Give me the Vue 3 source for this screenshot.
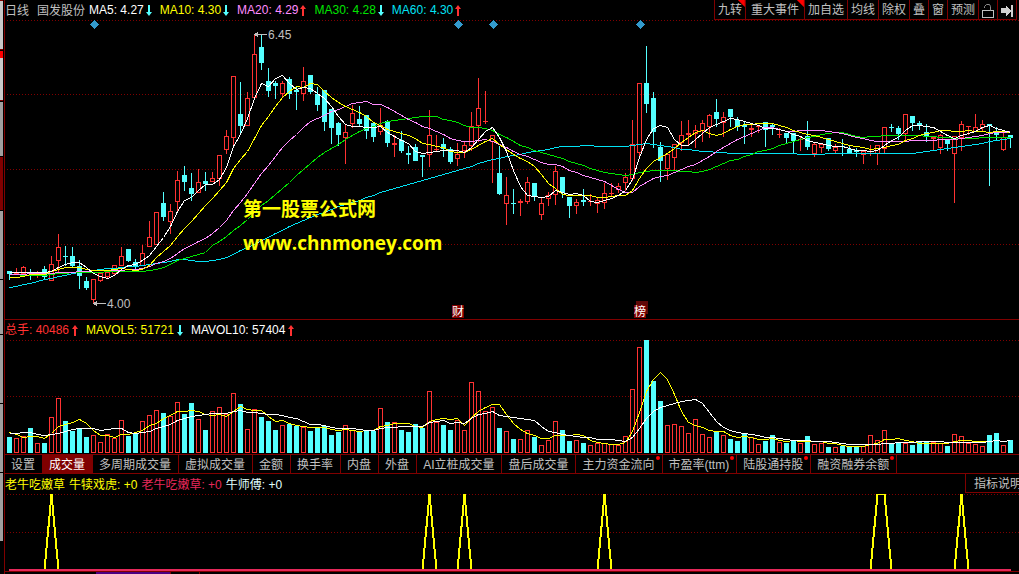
<script setup>
import { ref } from 'vue'

// kind high top bottom low volume  (r = rising, c = falling; prices on the chart's own scale)
const rows = `
c 271 271 274 280 16|r 268 272 274 275 15|r 266 267 273 276 17|c 269 272 273 280 25|r 271 273 275 278 10
c 266 269 277 279 10|r 256 264 280 280 36|r 234 247 260 272 55|c 246 256 257 266 32|c 247 256 266 267 22
c 260 266 276 289 25|c 277 281 288 290 16|r 279 279 299 303 18|r 272 273 280 282 11|r 271 272 276 279 19
r 265 265 273 275 15|r 247 256 265 266 33|c 249 249 261 262 17|c 259 262 266 269 20|r 245 253 265 266 32
r 221 237 246 247 38|r 212 212 244 245 43|c 192 203 217 221 40|r 204 211 221 234 37|r 171 180 201 212 51
c 166 175 182 191 39|c 173 188 194 201 50|r 169 182 192 193 34|c 172 181 184 191 23|r 172 178 181 182 42
r 155 155 178 186 46|r 130 136 149 154 39|r 76 76 137 146 60|c 82 114 126 134 49|r 92 98 125 126 24
r 34 54 97 98 44|c 35 47 63 70 36|c 68 81 91 97 32|c 81 83 86 99 23|r 81 83 93 98 28
c 77 79 94 99 29|c 87 90 92 110 27|r 67 81 93 101 26|c 75 75 92 94 22|c 87 94 105 111 26
c 90 90 122 131 27|c 109 109 128 144 18|c 122 123 135 146 21|r 125 132 137 164 28|r 105 113 123 128 23
c 106 119 124 126 21|c 115 115 131 139 22|c 122 123 137 142 22|r 108 125 131 135 45|c 120 121 143 147 31
r 135 143 145 157 31|c 131 140 151 153 23|c 146 153 155 164 21|c 144 147 161 161 29|c 155 155 157 177 25
r 110 135 154 167 62|r 135 149 150 151 31|c 138 144 149 157 28|c 147 149 162 164 23|r 143 154 158 166 33
r 142 145 150 158 23|r 112 126 145 151 71|r 78 108 125 142 62|r 91 121 122 124 42|r 135 135 141 183 46
c 146 173 194 195 25|r 177 195 203 225 22|c 189 203 204 214 14|r 199 201 203 216 14|r 177 182 201 204 23
c 183 183 197 201 16|r 197 203 214 220 8|r 192 195 198 206 13|r 166 171 194 205 32|c 177 177 193 198 23
c 197 197 206 218 12|r 199 202 205 214 13|c 189 200 202 206 10|r 194 201 202 206 8|r 197 200 203 213 10
r 183 193 202 209 10|r 183 193 194 197 9|r 183 186 189 193 8|r 173 177 182 191 17|r 120 144 178 181 64
r 83 83 152 158 106|c 46 83 104 113 113|c 92 98 132 148 72|c 142 147 161 182 52|r 153 154 168 180 28
r 144 144 157 171 29|r 121 135 142 151 27|r 120 133 135 145 20|r 125 130 133 148 34|r 120 123 130 142 19
r 114 115 126 138 16|c 99 112 119 127 22|r 112 117 122 137 18|c 109 109 117 127 14|c 117 120 127 131 12
c 121 125 127 144 19|r 125 128 130 137 16|r 125 126 127 133 9|c 122 122 130 147 12|c 123 125 127 135 18
r 128 134 135 138 11|c 133 133 138 143 10|c 133 133 141 153 13|r 137 139 140 151 10|c 121 136 147 150 17
r 143 144 153 157 9|r 143 144 147 153 10|c 138 138 149 151 6|r 144 147 150 153 6|c 139 146 147 156 7
c 145 149 153 153 7|c 148 150 152 157 7|r 151 151 154 164 7|r 145 151 152 156 18|r 145 145 153 165 13
r 127 127 148 153 23|c 124 127 128 132 10|c 126 128 134 140 10|r 114 114 133 140 10|c 116 116 123 131 8
c 121 123 125 130 11|c 124 132 136 142 11|r 137 137 139 150 11|r 134 135 147 154 10|c 139 139 144 151 7
r 136 136 153 203 19|r 121 124 137 151 17|r 126 126 127 135 10|r 114 127 131 132 9|r 120 124 127 132 7
c 124 124 126 186 18|c 127 133 135 141 20|r 133 137 149 151 8|c 135 135 138 148 13`

const VOLUME_BASE = 453
const bars = rows.trim().split(/[|\n]/).map((row, i) => {
  const [kind, ...n] = row.split(' ')
  const [high, top, bottom, low, volume] = n.map(Number)
  return { x: 9 + 7 * i, up: kind === 'r', high, top, bottom, low, volume, close: kind === 'r' ? top : bottom }
})

// Values before a full averaging window is available, as [bar index, value] knots.
function lead(knots, i) {
  for (let k = 1; k < knots.length; k++) {
    const [a, va] = knots[k - 1]
    const [b, vb] = knots[k]
    if (i <= b) return va + ((vb - va) * (i - a)) / (b - a)
  }
  return knots[knots.length - 1][1]
}

function average(values, span, knots, toY = (v) => v) {
  return values
    .map((_, i) => {
      const v = i < span - 1 ? lead(knots, i) : values.slice(i - span + 1, i + 1).reduce((a, b) => a + b) / span
      return `${bars[i].x + 0.5},${Math.round(toY(v)) + 0.5}`
    })
    .join(' ')
}

const closes = bars.map((b) => b.close)
const volumes = bars.map((b) => b.volume)
const volumeY = (v) => VOLUME_BASE - v

const priceLines = [
  { color: '#02e2f4', points: average(closes, 60, [[0, 287], [4, 281], [9, 273], [13, 269], [17, 266], [19, 265], [22, 262], [24, 259], [25, 259], [27, 261], [29, 260], [31, 257], [34, 247], [36, 240], [40, 226], [43, 217], [47, 206], [50, 200], [53, 192], [57, 184], [58, 182]]) },
  { color: '#00e600', points: average(closes, 30, [[0, 274], [4, 275], [6, 274], [9, 272], [18, 271], [20, 270], [21, 269], [23, 264], [24, 260], [28, 252]]) },
  { color: '#ff8cff', points: average(closes, 20, [[0, 274], [4, 273], [9, 272], [12, 270], [14, 270], [18, 269]]) },
  { color: '#ffff00', points: average(closes, 10, [[0, 277], [1, 277], [3, 274], [5, 274], [6, 271], [8, 267]]) },
  { color: '#ffffff', points: average(closes, 5, [[0, 272], [4, 272]]) },
]
const volumeLines = [
  { color: '#ffff00', points: average(volumes, 5, [[0, 21], [1, 19], [2, 16], [3, 17]], volumeY) },
  { color: '#ffffff', points: average(volumes, 10, [[0, 20], [3, 21], [5, 18], [6, 19], [8, 22]], volumeY) },
]

const signals = [6, 60, 65, 85, 124, 125, 136]
const signalPoints = bars.map((b, i) => `${b.x + 0.5},${signals.includes(i) ? 494 : 570}`).join(' ')

const left = (x) => ({ left: `${((x - 5) / 1014) * 100}%` })
const diamonds = [94, 458, 493, 640]

const averages = [
  { text: 'MA5: 4.27', tone: 'white', up: false },
  { text: 'MA10: 4.30', tone: 'yellow', up: false },
  { text: 'MA20: 4.29', tone: 'pink', up: true },
  { text: 'MA30: 4.28', tone: 'green', up: false },
  { text: 'MA60: 4.30', tone: 'blue', up: true },
]
const volumeReadings = [
  { text: '总手: 40486', tone: 'red', up: true },
  { text: 'MAVOL5: 51721', tone: 'yellow', up: false },
  { text: 'MAVOL10: 57404', tone: 'white', up: true },
]
const tools = [
  { text: '九转', flag: true },
  { text: '重大事件', flag: true, wide: true },
  { text: '加自选' },
  { text: '均线' },
  { text: '除权' },
  { text: '叠' },
  { text: '窗' },
  { text: '预测' },
]
const tabs = [
  { text: '设置' },
  { text: '成交量' },
  { text: '多周期成交量' },
  { text: '虚拟成交量' },
  { text: '金额' },
  { text: '换手率' },
  { text: '内盘' },
  { text: '外盘' },
  { text: 'AI立桩成交量' },
  { text: '盘后成交量' },
  { text: '主力资金流向', dot: true },
  { text: '市盈率(ttm)', dot: true },
  { text: '陆股通持股', dot: true },
  { text: '融资融券余额', dot: true },
]
const active = ref('成交量')
const UP = '3,0 6,4 4,4 4,11 2,11 2,4 0,4'
const DOWN = '2,0 4,0 4,7 6,7 3,11 0,7 2,7'
</script>

<template>
  <div class="terminal">
    <aside class="rail" aria-hidden="true">
      <i class="light first"></i>
      <i class="light flagged"></i>
      <i class="mid h54"></i>
      <i class="dark"></i>
      <i class="mid h69"></i>
      <i class="mid h54"></i>
      <i class="mid h69"></i>
      <i class="mid h69"></i>
      <i class="mid h69 last"></i>
    </aside>

    <main class="content">
      <header class="bar">
        <span class="period">日线</span>
        <span class="name">国发股份</span>
        <span v-for="m in averages" :key="m.text" class="reading" :class="m.tone">
          {{ m.text }}
          <svg class="trend" viewBox="0 0 6 11">
            <polygon :points="m.up ? UP : DOWN" :fill="m.up ? '#ff3232' : '#54ffff'" />
          </svg>
        </span>
        <nav class="tools">
          <button v-for="t in tools" :key="t.text" type="button" :class="{ flag: t.flag, wide: t.wide }">{{ t.text }}</button>
          <button type="button" aria-label="锁定">
            <svg class="tool-icon" viewBox="0 0 12 16" fill="none" stroke="#c0c0c0">
              <rect x="0.5" y="7.5" width="11" height="7" />
              <path d="M8.500 7.500V3.500L7.500 1.500H4.500L2.500 3.500V5" stroke="#8c8c8c" />
            </svg>
          </button>
          <button type="button" aria-label="最新">
            <svg class="tool-icon" viewBox="0 0 12 16" fill="#d0d0d0" shape-rendering="crispEdges">
              <path d="M0 5H5V2L10 8L5 13V10H0Z" />
              <rect x="10" y="2" width="2" height="12" />
            </svg>
          </button>
        </nav>
      </header>

      <section class="chart">
        <svg class="price" viewBox="5 20 1014 299" preserveAspectRatio="none" shape-rendering="crispEdges">
          <line v-for="y in [20, 94, 169, 244]" :key="y" class="grid" x1="7" x2="1019" :y1="y + 0.5" :y2="y + 0.5" />
          <g v-for="b in bars" :key="b.x" :class="b.up ? 'rise' : 'fall'">
            <rect v-if="b.top > b.high" class="solid" :x="b.x" :y="b.high" width="1" :height="b.top - b.high" />
            <rect v-if="b.low > b.bottom" class="solid" :x="b.x" :y="b.bottom" width="1" :height="b.low - b.bottom" />
            <rect v-if="b.up && b.bottom - b.top > 2" class="hollow" :x="b.x - 1.5" :y="b.top + 0.5" width="4" :height="b.bottom - b.top" />
            <rect v-else class="solid" :x="b.x - 2" :y="b.top" width="5" :height="b.bottom - b.top" />
          </g>
          <polyline v-for="l in priceLines" :key="l.color" :points="l.points" fill="none" :stroke="l.color" />
          <path v-for="x in diamonds" :key="x" :d="`M${x + 0.5} 20L${x + 5} 24.500L${x + 0.5} 29L${x - 4} 24.500Z`" fill="#3399cc" />
          <path d="M254 34.500L258 31.500V34H267V35H258V37.500Z" fill="#c0c0c0" />
          <path d="M93 303.500L97 300.500V303H106V304H97V306.500Z" fill="#c0c0c0" />
        </svg>
        <span class="mark high" :style="left(268)">6.45</span>
        <span class="mark low" :style="left(107)">4.00</span>
        <p class="watermark" :style="left(243)">
          <span class="site">第一股票公式网</span>
          <span class="address">www.chnmoney.com</span>
        </p>
        <span class="event" :style="left(452)">财</span>
        <span class="event stacked" :style="left(634)">榜</span>
      </section>

      <section class="volume">
        <div class="bar">
          <span v-for="m in volumeReadings" :key="m.text" class="reading spaced" :class="m.tone">
            {{ m.text }}
            <svg class="trend" viewBox="0 0 6 11">
              <polygon :points="m.up ? UP : DOWN" :fill="m.up ? '#ff3232' : '#54ffff'" />
            </svg>
          </span>
        </div>
        <svg class="bars" viewBox="5 340 1014 114" preserveAspectRatio="none" shape-rendering="crispEdges">
          <line v-for="y in [340, 396]" :key="y" class="grid" x1="7" x2="1019" :y1="y + 0.5" :y2="y + 0.5" />
          <g v-for="b in bars" :key="b.x" :class="b.up ? 'rise' : 'fall'">
            <rect v-if="b.up" class="hollow" :x="b.x - 1.5" :y="VOLUME_BASE - b.volume + 0.5" width="4" :height="b.volume - 1" />
            <rect v-else class="solid" :x="b.x - 2" :y="VOLUME_BASE - b.volume" width="5" :height="b.volume" />
          </g>
          <polyline v-for="l in volumeLines" :key="l.color" :points="l.points" fill="none" :stroke="l.color" />
        </svg>
      </section>

      <nav class="tabs" role="tablist">
        <button
          v-for="t in tabs"
          :key="t.text"
          type="button"
          role="tab"
          :aria-selected="active === t.text"
          :class="{ on: active === t.text, dot: t.dot }"
          @click="active = t.text"
        >{{ t.text }}</button>
      </nav>

      <section class="signal">
        <div class="bar legend">
          <span class="yellow">老牛吃嫩草</span>
          <span class="yellow">牛犊戏虎: +0</span>
          <span class="crimson">老牛吃嫩草: +0</span>
          <span class="pale">牛师傅: +0</span>
          <button class="help" type="button">指标说明</button>
        </div>
        <svg class="spikes" viewBox="5 494 1014 77" preserveAspectRatio="none" shape-rendering="crispEdges">
          <line v-for="y in [494, 532]" :key="y" class="grid" x1="7" x2="1019" :y1="y + 0.5" :y2="y + 0.5" />
          <polyline :points="signalPoints" fill="none" stroke="#ffff00" stroke-width="2" />
          <rect x="9" y="569" width="1002" height="2" fill="#e6285a" />
        </svg>
      </section>

      <footer class="scroll"><i class="thumb"></i><i class="tick"></i></footer>
    </main>
  </div>
</template>

<style>
html,
body {
  background: #000;
}
</style>

<style scoped>
.terminal {
  display: flex;
  min-height: 100vh;
  overflow: hidden;
  background: #000;
  color: #c0c0c0;
  font: 12px/20px "Liberation Sans", "Noto Sans CJK SC", sans-serif;
  white-space: nowrap;
}
button {
  margin: 0;
  padding: 0;
  border: 0;
  background: none;
  color: inherit;
  font: inherit;
  cursor: pointer;
}
svg {
  display: block;
}

.rail {
  flex: none;
  display: flex;
  flex-direction: column;
  gap: 1px;
  width: 4px;
}
.rail i {
  flex: none;
  width: 3px;
  background: #a0a0a0;
}
.rail .light {
  height: 50px;
  box-sizing: border-box;
  border-bottom: 1px solid #800000;
  background: #c8c8c8;
}
.rail .first {
  border-top: 1px solid #800000;
}
.rail .flagged {
  background: linear-gradient(#f00 0 7px, #c8c8c8 7px);
}
.rail .h54 {
  height: 54px;
}
.rail .dark {
  height: 53px;
  background: #800000;
}
.rail .h69 {
  height: 68px;
}

.content {
  flex: 1;
  min-width: 0;
  border-left: 1px solid #800000;
}
.bar {
  display: flex;
  height: 20px;
}
.period,
.name {
  line-height: 22px;
}
.period {
  margin-right: 8px;
}
.name {
  margin-right: 4px;
}
.reading {
  display: flex;
  align-items: center;
  gap: 2px;
  margin-right: 8px;
}
.spaced {
  gap: 3px;
}
.trend {
  width: 6px;
  height: 11px;
}
.white { color: #fff; }
.yellow { color: #ff0; }
.pink { color: #ff8cff; }
.green { color: #00e600; }
.blue { color: #02e2f4; }
.red { color: #ff3232; }
.crimson { color: #e6285a; }
.pale { color: #e0ffff; }

.tools {
  display: flex;
  margin-left: auto;
  margin-right: 2px;
  border-left: 1px solid #800000;
}
.tools button {
  position: relative;
  padding: 2px 3px 0;
  border-right: 1px solid #800000;
  border-bottom: 1px solid #800000;
  line-height: 17px;
}
.tools .wide {
  padding: 2px 5px 0;
}
.tools .flag::after {
  content: "";
  position: absolute;
  top: 0;
  right: 0;
  width: 7px;
  height: 7px;
  background: #f00;
  clip-path: polygon(0 0, 100% 0, 100% 100%);
}
.tool-icon {
  width: 12px;
  height: 16px;
}

.chart {
  position: relative;
  border-bottom: 1px solid #800000;
}
.price,
.bars,
.spikes {
  width: 100%;
}
.price {
  height: 299px;
}
.bars {
  height: 114px;
}
.spikes {
  height: 77px;
}
.grid {
  stroke: #800000;
  stroke-dasharray: 1 2;
}
.rise .solid { fill: #ff3232; }
.rise .hollow { fill: none; stroke: #ff3232; }
.fall .solid { fill: #54ffff; }

.mark {
  position: absolute;
}
.high {
  top: 5px;
}
.low {
  top: 274px;
}
.watermark {
  position: absolute;
  top: 172px;
  display: grid;
  margin: 0;
  color: #ff0;
  font: bold 19px/34px "Open Sans", "Noto Sans CJK SC", sans-serif;
}
.event {
  position: absolute;
  top: 285px;
  width: 12px;
  height: 13px;
  background: #800000;
  color: #fff;
  line-height: 14px;
}
.stacked {
  box-shadow: 2px -4px #600808;
}

.tabs {
  display: flex;
  border-top: 1px solid #800000;
  border-bottom: 1px solid #800000;
}
.tabs button {
  position: relative;
  padding: 2px 7px 0 6px;
  border-right: 1px solid #800000;
  line-height: 16px;
}
.tabs .on {
  background: #800000;
  color: #fff;
}
.tabs .dot::after {
  content: "";
  position: absolute;
  top: 1px;
  right: 2px;
  width: 4px;
  height: 4px;
  border-radius: 50%;
  background: #f00;
}

.legend {
  gap: 4px;
  line-height: 22px;
}
.help {
  flex: none;
  width: 54px;
  height: 19px;
  margin-left: auto;
  padding-left: 8px;
  overflow: hidden;
  border-left: 1px solid #800000;
  border-bottom: 1px solid #800000;
  line-height: 20px;
  text-align: left;
}
.scroll {
  display: flex;
  height: 2px;
  padding-left: 9%;
  border-top: 1px solid #800000;
}
.thumb {
  width: 8%;
  background: #4b0082;
  border-right: 1px solid #800000;
}
.tick {
  width: 3%;
  border-right: 1px solid #800000;
}
</style>
